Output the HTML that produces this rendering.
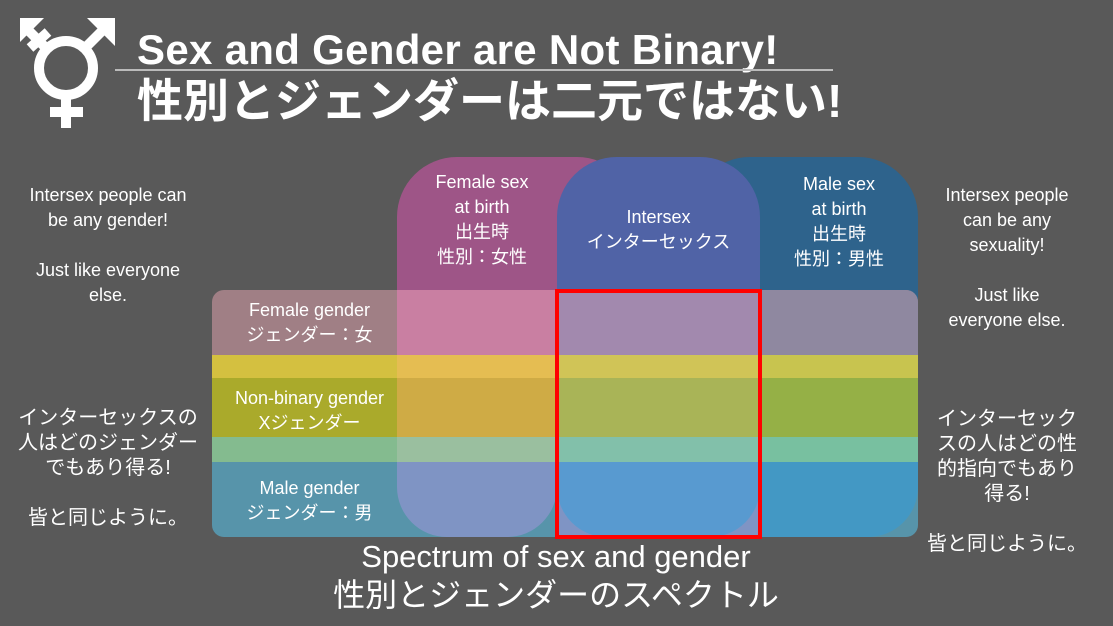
<!DOCTYPE html>
<html><head><meta charset="utf-8"><style>
*{margin:0;padding:0;box-sizing:border-box}
body{width:1113px;height:626px;background:#595959;position:relative;overflow:hidden;font-family:"Liberation Sans","Noto Sans CJK JP",sans-serif;color:#fff}
.a{position:absolute}
.t{position:absolute;text-align:center;line-height:25px;font-size:17px}
</style></head><body>
<svg class="a" style="left:18px;top:14px" width="100" height="118" viewBox="18 14 100 118">
<g fill="none" stroke="#fff" stroke-width="10">
<circle cx="66" cy="68" r="27"/>
<line x1="66" y1="95" x2="66" y2="128"/>
<line x1="50" y1="112" x2="83" y2="112"/>
<line x1="85" y1="48" x2="108" y2="25"/>
<line x1="46" y1="48" x2="28" y2="30"/>
<line x1="30" y1="48" x2="48" y2="32"/>
</g>
<path d="M87 18 L115 18 L115 46 Z" fill="#fff"/>
<path d="M20 18 L44 18 L20 42 Z" fill="#fff"/>
</svg>
<div class="a" style="left:137px;top:26px;font-size:42px;font-weight:bold;line-height:48px;white-space:nowrap;letter-spacing:0.3px">Sex and Gender are Not Binary!</div>
<div class="a" style="left:115px;top:69px;width:718px;height:2px;background:#bbb"></div>
<div class="a" style="left:137px;top:74px;font-size:46px;font-weight:bold;line-height:54px;white-space:nowrap">性別とジェンダーは二元ではない!</div>

<div class="a" style="left:397px;top:157px;width:240px;height:200px;background:#9e5587;border-radius:60px 60px 0 0"></div>
<div class="a" style="left:690px;top:157px;width:228px;height:200px;background:#2e638c;border-radius:60px 60px 0 0"></div>
<div class="a" style="left:557px;top:157px;width:203px;height:200px;background:#5063a6;border-radius:60px 60px 0 0"></div>

<div class="a" style="left:212px;top:290px;width:706px;height:247px;border-radius:12px;overflow:hidden;background:linear-gradient(#a07f85 0 65px,#d4c040 65px 88px,#aaaa2b 88px 147px,#84bb8f 147px 172px,#5794aa 172px)">
 <div class="a" style="left:185px;top:0;width:160px;height:247px;border-radius:0 0 50px 50px;background:linear-gradient(#c97fa2 0 65px,#e5bd52 65px 88px,#cfab45 88px 147px,#9abf9f 147px 172px,#7f94c4 172px)"></div>
 <div class="a" style="left:345px;top:0;width:203px;height:247px;background:#7f94c4"></div>
 <div class="a" style="left:345px;top:0;width:203px;height:247px;border-radius:0 0 50px 50px;background:linear-gradient(#a289ae 0 65px,#d0c457 65px 88px,#a9b457 88px 147px,#82c0aa 147px 172px,#589ad0 172px)"></div>
 <div class="a" style="left:548px;top:0;width:158px;height:247px;border-radius:0 0 50px 0;background:linear-gradient(#8f88a0 0 65px,#c8c44f 65px 88px,#95b046 88px 147px,#78c0a0 147px 172px,#4398c4 172px)"></div>
</div>
<div class="a" style="left:555px;top:289px;width:207px;height:250px;border:4px solid #f00"></div>

<div class="t" style="left:397px;top:170px;width:170px;font-size:18px">Female sex<br>at birth<br>出生時<br>性別：女性</div>
<div class="t" style="left:557px;top:205px;width:203px;font-size:18px">Intersex<br>インターセックス</div>
<div class="t" style="left:760px;top:172px;width:158px;font-size:18px">Male sex<br>at birth<br>出生時<br>性別：男性</div>
<div class="t" style="left:212px;top:298px;width:195px;font-size:18px">Female gender<br>ジェンダー：女</div>
<div class="t" style="left:212px;top:386px;width:195px;font-size:18px">Non-binary gender<br>Xジェンダー</div>
<div class="t" style="left:212px;top:476px;width:195px;font-size:18px">Male gender<br>ジェンダー：男</div>

<div class="t" style="left:0;top:183px;width:216px;font-size:18px">Intersex people can<br>be any gender!<br><br>Just like everyone<br>else.</div>
<div class="t" style="left:0;top:406px;width:216px;font-size:20px">インターセックスの<br>人はどのジェンダー<br>でもあり得る!<br><br>皆と同じように。</div>
<div class="t" style="left:920px;top:183px;width:174px;font-size:18px">Intersex people<br>can be any<br>sexuality!<br><br>Just like<br>everyone else.</div>
<div class="t" style="left:920px;top:407px;width:174px;font-size:20px">インターセック<br>スの人はどの性<br>的指向でもあり<br>得る!<br><br>皆と同じように。</div>

<div class="t" style="left:206px;top:538px;width:700px;font-size:31px;line-height:38px">Spectrum of sex and gender<br><span style="font-size:32px">性別とジェンダーのスペクトル</span></div>
</body></html>
